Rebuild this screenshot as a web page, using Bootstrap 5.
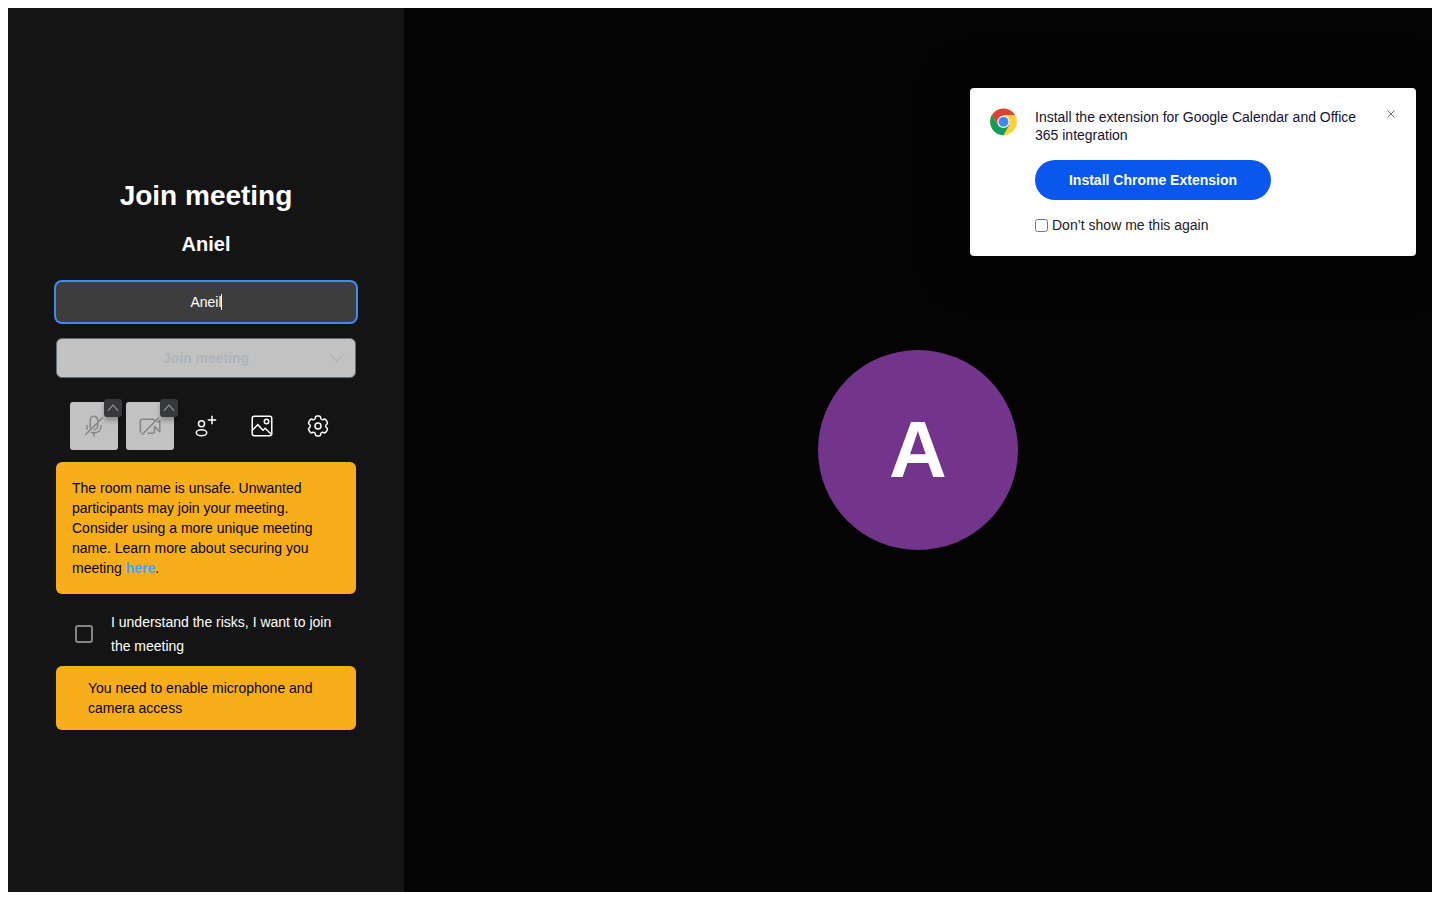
<!DOCTYPE html>
<html lang="en">
<head>
<meta charset="utf-8">
<meta name="viewport" content="width=device-width, initial-scale=1">
<title>Join meeting</title>
<link rel="stylesheet" href="https://cdn.jsdelivr.net/npm/bootstrap@5.3.0/dist/css/bootstrap.min.css">
<style>
  body { font-family: "Liberation Sans", Arial, sans-serif; font-size: 14px; line-height: 20px; background: #fff; }
  .stage { background: #040404; }
  .side-panel { width: 396px; background: #141414; color: #fff; }
  .prejoin { width: 300px; }
  .prejoin h1 { font-size: 28px; line-height: 36px; }
  .prejoin h2 { font-size: 20px; line-height: 28px; }
  .name-field, .name-field:focus { height: 40px; font-size: 14px; line-height: 20px; color: #fff; background: #3d3d3d; border: 0; border-radius: 6px; box-shadow: 0 0 0 2px #4687ed; caret-color: transparent; }
  .name-caret { left: calc(50% + 15px); top: 12px; width: 1px; height: 16px; background: #fff; }
  .join-btn, .join-btn:disabled { height: 40px; font-size: 14px; line-height: 20px; background: #c2c2c2; color: #adb5bd; border: 1px solid #5e6d7a; border-radius: 6px; opacity: 1; }
  .join-caret { right: 10px; top: 11px; }
  .tool-btn { width: 48px; height: 48px; border-radius: 3px; color: #fff; }
  .tool-off, .tool-off:disabled { background: #c2c2c2; color: #858585; border: 0; opacity: 1; }
  .tool-more { top: -3px; right: -4px; width: 18px; height: 18px; border-radius: 3px; background: #36383c; color: #929292; box-shadow: 0 4px 4px rgba(0,0,0,.25); }
  .notice { background: #f8ae1a; color: #040404; border-radius: 6px; }
  .notice a { color: #44a5ff; }
  .notice-device { padding: 12px 32px; }
  .risk-row { line-height: 24px; gap: 18px; padding: 0 19px; }
  .risk-row .form-check-input { width: 18px; height: 18px; border: 2px solid #858585; border-radius: 3px; background-color: transparent; }
  .avatar-disc { width: 200px; height: 200px; background: #73348c; color: #fff; font-size: 80px; line-height: 92px; }
  .ext-banner { top: 80px; right: 16px; width: 446px; padding: 20px; gap: 17px; border-radius: 4px; background: #fff; color: #1c2025; box-shadow: 0 4px 48px rgba(0,0,0,.5); }
  .ext-text { line-height: 18px; color: #131331; }
  .ext-btn, .ext-btn:hover { width: 236px; height: 40px; font-size: 14px; line-height: 20px; background: #0957ed; color: #fff; }
  .ext-close { width: 12px; height: 12px; color: #5e6d7a; }
  .ext-check { gap: 4px; line-height: 18px; padding-bottom: 2px; }
  .ext-check input { width: 13px; height: 13px; }
</style>
</head>
<body>
<div class="p-2 vh-100">
  <div class="stage d-flex h-100 position-relative overflow-hidden">
    <section class="side-panel d-flex flex-column align-items-center justify-content-center flex-shrink-0">
      <div class="prejoin pt-2">
        <h1 class="fw-bold text-center mb-3">Join meeting</h1>
        <h2 class="fw-bold text-center mb-4">Aniel</h2>
        <div class="position-relative mb-3">
          <input class="form-control name-field text-center" type="text" value="Aneil" aria-label="Your name" autofocus>
          <span class="name-caret position-absolute"></span>
        </div>
        <button class="btn join-btn w-100 fw-bold position-relative mb-4" type="button" disabled>Join meeting
          <svg class="position-absolute join-caret" width="16" height="16" viewBox="0 0 16 16" fill="none" stroke="currentColor" stroke-width="1.3"><path d="M.5 3.5 8 11.5 15.5 3.5"/></svg>
        </button>
        <div class="d-flex justify-content-center gap-2 mb-2 pb-1">
          <div class="position-relative">
            <button class="btn tool-btn tool-off p-0 d-flex align-items-center justify-content-center" type="button" disabled aria-label="Microphone">
              <svg width="24" height="24" viewBox="0 0 24 24" fill="none" stroke="currentColor" stroke-width="1.5"><path d="M8.250 14V6a3.750 3.750 0 0 1 7.500 0v5.500a4 4 0 0 1-4.200 4.300M5 11v2.200c0 1 .2 1.700.6 2.300M19 11v1.200c0 4-2.800 6.600-7 6.600-1.300 0-2.400-.2-3.400-.7M12 18.800v3.700M3.300 20.700 20.700 3.500"/></svg>
            </button>
            <button class="btn tool-more position-absolute p-0 border-0 d-flex align-items-center justify-content-center" type="button" aria-label="Audio options"><svg width="12" height="8" viewBox="0 0 12 8" fill="none" stroke="currentColor" stroke-width="1.2"><path d="M.8 6.800 6 1.200l5.200 5.600"/></svg></button>
          </div>
          <div class="position-relative">
            <button class="btn tool-btn tool-off p-0 d-flex align-items-center justify-content-center" type="button" disabled aria-label="Camera">
              <svg width="24" height="24" viewBox="0 0 24 24" fill="none" stroke="currentColor" stroke-width="1.5" stroke-linejoin="round"><path d="M16.500 8V7.200a2 2 0 0 0-2-2H4.300a2 2 0 0 0-2 2v9.500c0 1 .4 1.600 1.200 1.900M9.500 19.200h5a2 2 0 0 0 2-2V12.500l5.300 5.300V6.500L19 8.300M4 20.700 20.700 3.500"/></svg>
            </button>
            <button class="btn tool-more position-absolute p-0 border-0 d-flex align-items-center justify-content-center" type="button" aria-label="Video options"><svg width="12" height="8" viewBox="0 0 12 8" fill="none" stroke="currentColor" stroke-width="1.2"><path d="M.8 6.800 6 1.200l5.200 5.600"/></svg></button>
          </div>
          <button class="btn tool-btn border-0 p-0 d-flex align-items-center justify-content-center" type="button" aria-label="Invite people">
            <svg width="24" height="24" viewBox="0 0 24 24" fill="none" stroke="currentColor" stroke-width="1.5"><circle cx="7.500" cy="9.800" r="3"/><ellipse cx="7.500" cy="18.800" rx="5.250" ry="3"/><path d="M18 1.800v8.400M13.800 6h8.400"/></svg>
          </button>
          <button class="btn tool-btn border-0 p-0 d-flex align-items-center justify-content-center" type="button" aria-label="Select background">
            <svg width="24" height="24" viewBox="0 0 24 24" fill="none" stroke="currentColor" stroke-width="1.5"><rect x="2.250" y="2.250" width="19.500" height="19.500" rx="2"/><circle cx="16.500" cy="7.500" r="2.250"/><path d="m2.500 16 5.300-5.300 5.200 5.600 2.200-2.100 6.300 6.300"/></svg>
          </button>
          <button class="btn tool-btn border-0 p-0 d-flex align-items-center justify-content-center" type="button" aria-label="Settings">
            <svg width="24" height="24" viewBox="0 0 24 24" fill="none" stroke="currentColor" stroke-width="1.5" stroke-linejoin="round"><circle cx="12" cy="12" r="3"/><path id="gear-half" d="M12 2H12.800Q14.500 2 14.700 3.400V4.500Q15.500 5.940 16.970 5.800L18 5.190Q19.410 4.830 20.260 6.310L21.060 7.690Q21.910 9.170 20.900 10.210L20.200 10.690Q19 12 20.200 13.310L20.900 13.790Q21.910 14.830 21.060 16.310L20.260 17.690Q19.410 19.170 18 18.810L16.970 18.200Q15.500 18.060 14.700 19.500V20.600Q14.500 22 12.800 22H12"/><use href="#gear-half" transform="matrix(-1 0 0 1 24 0)"/></svg>
          </button>
        </div>
        <div class="notice p-3 mb-3">The room name is unsafe. Unwanted participants may join your meeting. Consider using a more unique meeting name. Learn more about securing you meeting <a class="fw-bold text-decoration-none" href="#">here</a>.</div>
        <div class="risk-row d-flex align-items-center mb-2">
          <input class="form-check-input flex-shrink-0 m-0" type="checkbox" id="risk">
          <label for="risk">I understand the risks, I want to join the meeting</label>
        </div>
        <div class="notice notice-device">You need to enable microphone and camera access</div>
      </div>
    </section>
    <main class="flex-grow-1 d-flex align-items-center justify-content-center">
      <div class="avatar-disc rounded-circle fw-bold d-flex align-items-center justify-content-center">A</div>
    </main>
    <aside class="ext-banner position-absolute d-flex align-items-start">
      <svg class="flex-shrink-0" width="28" height="28" viewBox="0 0 28 28"><circle cx="13.500" cy="13.800" r="13.400" fill="#ffcd40"/><path d="M7.700 17.100 1.900 7.100A13.400 13.400 0 0 1 25.100 7.100H13.500Z" fill="#db4437"/><path d="M1.900 7.100A13.400 13.400 0 0 0 13.500 27.200L19.300 17.100H7.700Z" fill="#0f9d58"/><circle cx="13.500" cy="13.800" r="6.200" fill="#f1f1f1"/><circle cx="13.500" cy="13.800" r="4.900" fill="#4285f4"/></svg>
      <div class="flex-grow-1">
        <div class="ext-text mb-3">Install the extension for Google Calendar and Office 365 integration</div>
        <button class="btn ext-btn rounded-pill fw-bold p-0 border-0 d-block mb-3" type="button">Install Chrome Extension</button>
        <div class="ext-check d-flex align-items-center">
          <input class="m-0" type="checkbox" id="ext-hide">
          <label for="ext-hide">Don’t show me this again</label>
        </div>
      </div>
      <button class="btn ext-close p-0 border-0 d-flex align-items-center justify-content-center" type="button" aria-label="Close"><svg width="8" height="8" viewBox="0 0 8 8" stroke="currentColor"><path d="m.5.5 7 7m0-7-7 7"/></svg></button>
    </aside>
  </div>
</div>
<script src="https://cdn.jsdelivr.net/npm/bootstrap@5.3.0/dist/js/bootstrap.bundle.min.js"></script>
</body>
</html>
